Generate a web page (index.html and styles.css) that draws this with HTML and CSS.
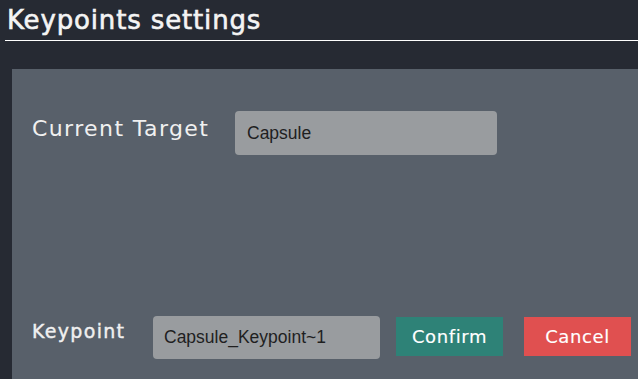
FILE: index.html
```html
<!DOCTYPE html>
<html>
<head>
<meta charset="utf-8">
<link rel="stylesheet" href="styles.css">
</head>
<body>
<div class="header"><h1 class="title">Keypoints settings</h1></div>
<div class="panel">
  <div class="row row-target">
    <span class="label label-target">Current Target</span>
    <div class="field field-target">Capsule</div>
  </div>
  <div class="row row-keypoint">
    <span class="label label-keypoint">Keypoint</span>
    <div class="field field-keypoint">Capsule_Keypoint~1</div>
    <button class="btn btn-confirm">Confirm</button>
    <button class="btn btn-cancel">Cancel</button>
  </div>
</div>
</body>
</html>
```
FILE: styles.css
```css
html, body {
  margin: 0;
  padding: 0;
  height: 100%;
  background: #262a33;
  overflow: hidden;
}
.header {
  margin-left: 5px;
  height: 40px;
  border-bottom: 1px solid #ffffff;
  box-sizing: content-box;
}
.title {
  margin: 0;
  padding: 5px 0 0 2px;
  font-family: "DejaVu Sans", sans-serif;
  font-weight: normal;
  font-size: 26px;
  line-height: 30px;
  letter-spacing: 0.85px;
  color: #f4f4f4;
  -webkit-text-stroke: 0.6px #f4f4f4;
}
.panel {
  margin: 28px 0 0 12px;
  height: 310px;
  background: #58606a;
  box-sizing: border-box;
  padding: 42px 7px 20px 20px;
  display: flex;
  flex-direction: column;
  justify-content: space-between;
}
.row {
  display: flex;
  align-items: center;
}
.label {
  color: #f0f0f0;
}
.label-target {
  font-family: "DejaVu Sans", sans-serif;
  font-size: 22px;
  letter-spacing: 1.4px;
  width: 203px;
  margin-top: -10px;
}
.label-keypoint {
  font-family: "DejaVu Sans", sans-serif;
  font-size: 19px;
  width: 121px;
  margin-top: -14px;
  letter-spacing: 1.3px;
  -webkit-text-stroke: 0.4px #f0f0f0;
}
.field {
  background: #999c9f;
  border-radius: 4px;
  box-sizing: border-box;
  font-family: "Liberation Sans", Arial, sans-serif;
  font-size: 17.5px;
  color: #1f1f1f;
  display: flex;
  align-items: center;
  padding-left: 12px;
}
.field-target {
  width: 262px;
  height: 44px;
}
.field-keypoint {
  width: 227px;
  height: 43px;
  padding-left: 11px;
}
.btn {
  border: none;
  border-radius: 0;
  height: 39px;
  width: 107px;
  color: #ffffff;
  font-family: "DejaVu Sans", sans-serif;
  font-size: 18px;
  letter-spacing: 0.6px;
  padding: 0;
  margin-top: -2px;
  -webkit-text-stroke: 0.15px #ffffff;
}
.btn-confirm {
  background: #2e8277;
  margin-left: 16px;
}
.btn-cancel {
  background: #e05050;
  margin-left: 21px;
}
```
